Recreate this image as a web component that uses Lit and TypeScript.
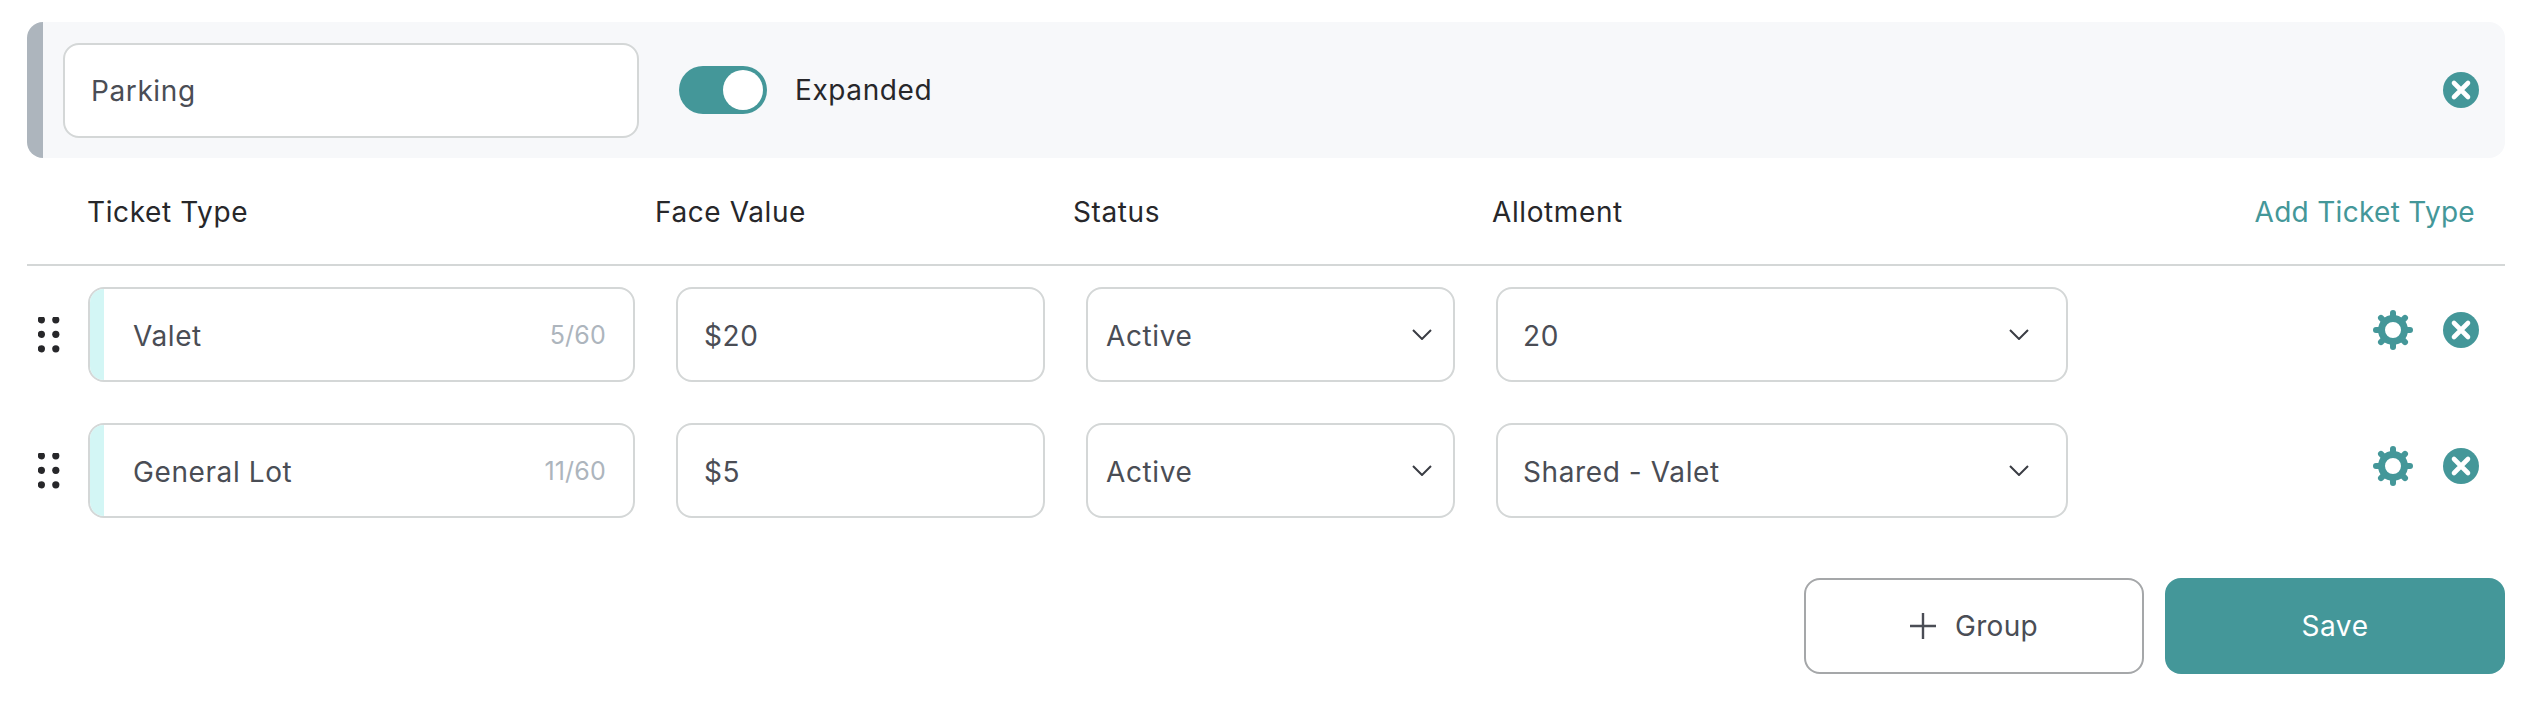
import { LitElement, html, css, svg } from "lit";
import { customElement } from "lit/decorators.js";

const closeIcon = html`<svg class="ico" width="36" height="36" viewBox="0 0 36 36"><circle cx="18" cy="18" r="18" fill="#449799"/><path d="M11 11 25 25M25 11 11 25" stroke="#fff" stroke-width="4.6" stroke-linecap="round"/></svg>`;
const teeth = [0, 45, 90, 135, 180, 225, 270, 315];
const gearIcon = html`<svg class="ico" width="40" height="40" viewBox="0 0 40 40" fill="none">
  <circle cx="20" cy="20" r="11.5" stroke="#449799" stroke-width="7"/>
  ${teeth.map((a) => svg`<line x1="20" y1="6" x2="20" y2="3" stroke="#449799" stroke-width="6" stroke-linecap="round" transform="rotate(${a} 20 20)"/>`)}
</svg>`;
const dots = html`<svg width="22" height="36" viewBox="0 0 22 36" fill="#27272a">
  ${[2.8, 17.3, 31.8].map((y) => svg`<circle cx="3.4" cy=${y} r="3.6"/><circle cx="17.8" cy=${y} r="3.6"/>`)}
</svg>`;
const chevron = html`<svg class="chev" width="20" height="11" viewBox="0 0 20 11" fill="none"><path d="M1 1 10 10 19 1" stroke="#3a3d44" stroke-width="2"/></svg>`;

@customElement("app-root")
export class AppRoot extends LitElement {
  static styles = css`
    :host {
      display: block;
      box-sizing: border-box;
      width: 2536px;
      height: 706px;
      padding: 22px 31px 0 27px;
      background: #fff;
      font-family: "Inter", "Liberation Sans", sans-serif;
      font-size: 28px;
      letter-spacing: 0.6px;
      color: #4a4d55;
    }
    .bar {
      display: flex;
      align-items: center;
      box-sizing: border-box;
      height: 136px;
      padding: 0 26px 0 20px;
      background: #f7f8fa;
      border-left: 16px solid #adb5bd;
      border-radius: 16px;
    }
    .field {
      display: flex;
      align-items: center;
      box-sizing: border-box;
      background: #fff;
      border: 2px solid #d4d7d7;
      border-radius: 16px;
    }
    .name { width: 576px; height: 95px; padding: 2px 26px 0; }
    .toggle {
      display: flex;
      justify-content: flex-end;
      align-items: center;
      box-sizing: border-box;
      width: 88px;
      height: 48px;
      margin-left: 40px;
      padding-right: 4px;
      background: #449799;
      border-radius: 24px;
    }
    .knob { width: 40px; height: 40px; border-radius: 50%; background: #fff; }
    .toggle-label { margin-left: 28px; color: #27272a; }
    .ico { display: block; flex: none; }
    .bar .ico { margin-left: auto; }
    .head {
      display: grid;
      grid-template-columns: 568px 418px 419px 1fr;
      align-items: center;
      box-sizing: border-box;
      height: 108px;
      padding: 2px 30px 0 60px;
      border-bottom: 2px solid #d4d7d7;
      color: #27272a;
    }
    .last { display: flex; justify-content: space-between; }
    .add { color: #449799; letter-spacing: 0.3px; }
    .rows {
      display: flex;
      flex-direction: column;
      gap: 41px;
      margin-top: 21px;
    }
    .row { display: flex; align-items: center; }
    .handle { flex: none; width: 50px; padding-left: 11px; }
    .handle svg { display: block; }
    .cells {
      flex: 1;
      display: grid;
      grid-template-columns: 547px 369px 369px 572px 1fr;
      column-gap: 41px;
      align-items: center;
    }
    .cell { height: 95px; padding-top: 2px; }
    .ticket {
      position: relative;
      justify-content: space-between;
      padding-left: 43px;
      padding-right: 27px;
      overflow: hidden;
    }
    .accent {
      position: absolute;
      left: 0;
      top: 0;
      bottom: 0;
      width: 14px;
      background: #d3f6f5;
    }
    .count { font-size: 25px; color: #adb5bd; letter-spacing: 0.2px; margin-top: -2px; }
    .plain { padding-left: 26px; padding-right: 26px; }
    .select { justify-content: space-between; padding-left: 18px; padding-right: 21px; }
    .select.wide { padding-left: 25px; padding-right: 37px; }
    .chev { display: block; flex: none; margin-top: -2px; }
    .actions {
      display: flex;
      justify-content: flex-end;
      align-items: center;
      gap: 30px;
      padding: 0 26px 10px 0;
    }
    .footer {
      display: flex;
      justify-content: flex-end;
      gap: 21px;
      margin-top: 60px;
    }
    .btn {
      display: flex;
      justify-content: center;
      align-items: center;
      box-sizing: border-box;
      width: 340px;
      height: 96px;
      border-radius: 16px;
    }
    .group { gap: 19px; border: 2px solid #a5a7a9; background: #fff; letter-spacing: 0.3px; }
    .save { background: #449799; color: #fff; }
    .group svg { display: block; }
  `;

  private ticketRow(name: string, count: string, face: string, status: string, allot: string) {
    return html`<div class="row">
      <div class="handle">${dots}</div>
      <div class="cells">
        <div class="field cell ticket"><span class="accent"></span><span>${name}</span><span class="count">${count}</span></div>
        <div class="field cell plain">${face}</div>
        <div class="field cell select"><span>${status}</span>${chevron}</div>
        <div class="field cell select wide"><span>${allot}</span>${chevron}</div>
        <div class="actions">${gearIcon}${closeIcon}</div>
      </div>
    </div>`;
  }

  render() {
    return html`
      <div class="bar">
        <div class="field name">Parking</div>
        <div class="toggle"><div class="knob"></div></div>
        <span class="toggle-label">Expanded</span>
        ${closeIcon}
      </div>
      <div class="head">
        <span>Ticket Type</span><span>Face Value</span><span>Status</span>
        <div class="last"><span>Allotment</span><span class="add">Add Ticket Type</span></div>
      </div>
      <div class="rows">
        ${this.ticketRow("Valet", "5/60", "$20", "Active", "20")}
        ${this.ticketRow("General Lot", "11/60", "$5", "Active", "Shared - Valet")}
      </div>
      <div class="footer">
        <div class="btn group">
          <svg width="26" height="26" viewBox="0 0 26 26"><path d="M13 0V26M0 13H26" stroke="#4a4d55" stroke-width="2.4"/></svg>
          <span>Group</span>
        </div>
        <div class="btn save">Save</div>
      </div>
    `;
  }
}
